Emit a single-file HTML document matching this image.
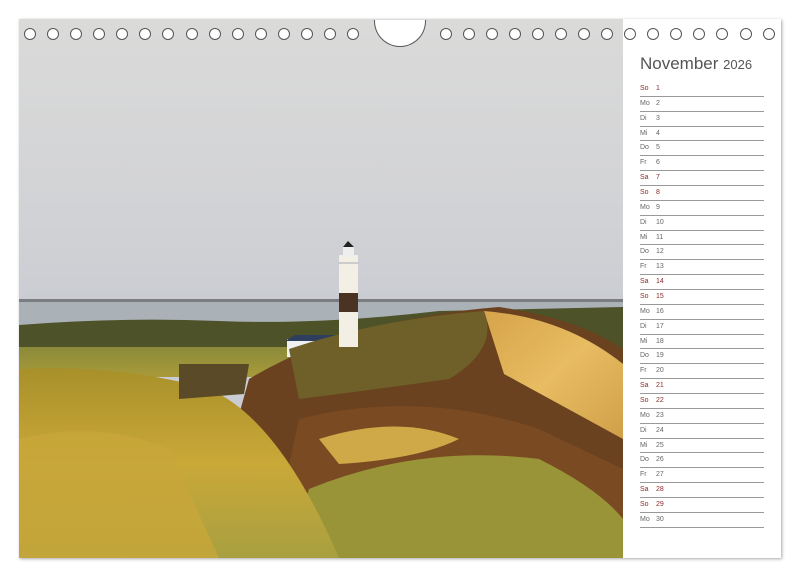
<!DOCTYPE html>
<html><head><meta charset="utf-8"><style>
*{margin:0;padding:0;box-sizing:border-box}
body{width:800px;height:577px;background:#fff;position:relative;overflow:hidden;font-family:"Liberation Sans",sans-serif}
.page{position:absolute;left:19px;top:19px;width:762px;height:539px;background:#fff;box-shadow:1px 1px 3px rgba(0,0,0,.35)}
.photo{position:absolute;left:19px;top:19px;width:604px;height:539px;overflow:hidden;
background:linear-gradient(#dadad9 0%,#d3d4d6 30%,#ccced3 50%,#c9ccd2 52%)}
.hole{position:absolute;top:28px;width:12px;height:12px;border:1.3px solid #555;border-radius:50%;background:#fff}
.cal{position:absolute;left:640px;top:82px;width:124px}
.row{height:14.86px;border-bottom:1.3px solid #999;font-size:7px;color:#666;line-height:13px;position:relative;padding-top:0}
.row span{position:absolute;left:16px}
.row.r{color:#8b2b2b}
</style></head><body>
<div class="page"></div>
<div class="photo">
<svg width="604" height="539" viewBox="0 0 604 539">
<defs>
<linearGradient id="g1" x1="0" y1="0" x2="0" y2="1"><stop offset="0" stop-color="#8a8a3a"/><stop offset="1" stop-color="#a89a3a"/></linearGradient>
<linearGradient id="dune" x1="0" y1="0" x2="1" y2="1"><stop offset="0" stop-color="#d6a44a"/><stop offset="0.5" stop-color="#e8bc62"/><stop offset="1" stop-color="#d0a048"/></linearGradient>
<linearGradient id="fg" x1="0" y1="0" x2="0" y2="1"><stop offset="0" stop-color="#a8902a"/><stop offset="0.5" stop-color="#caa838"/><stop offset="1" stop-color="#a8a040"/></linearGradient>
</defs>
<rect x="0" y="280" width="604" height="3" fill="#7a7c80"/>
<rect x="0" y="283" width="604" height="25" fill="#aab2b8"/>
<path d="M0 306 Q100 298 200 302 T420 292 L604 288 L604 340 L0 340Z" fill="#4e5228"/>
<rect x="0" y="328" width="300" height="30" fill="url(#g1)"/>
<rect x="268" y="320" width="50" height="18" fill="#eef0f2"/>
<path d="M266 322 L276 316 L318 316 L316 322Z" fill="#2e3e5e"/>
<path d="M230 360 Q330 300 480 288 Q560 300 604 330 L604 539 L180 539Z" fill="#6a4220"/>
<path d="M465 292 Q545 298 604 345 L604 420 Q540 385 485 355 Z" fill="url(#dune)"/>
<path d="M270 330 Q360 300 465 292 Q480 330 430 360 Q360 370 280 380Z" fill="#6e6028"/>
<path d="M280 400 Q400 370 520 410 L604 450 L604 539 L250 539Z" fill="#7a4a22"/>
<path d="M300 420 Q380 395 440 420 Q400 440 320 445Z" fill="#cfa848"/>
<path d="M290 470 Q400 425 520 440 Q580 470 604 500 L604 539 L270 539Z" fill="#9a9438"/>
<path d="M0 350 Q100 345 190 370 Q260 400 320 539 L0 539Z" fill="url(#fg)"/>
<path d="M0 420 Q80 400 150 430 L200 539 L0 539Z" fill="#c8a63a" opacity=".8"/>
<path d="M160 345 L230 345 L225 375 L160 380Z" fill="#5a4a28"/>
<rect x="320" y="236" width="19" height="92" fill="#f3efe4"/>
<rect x="320" y="274" width="19" height="19" fill="#4a3322"/>
<rect x="324" y="228" width="11" height="10" fill="#eee"/>
<path d="M324 228 L329 222 L335 228Z" fill="#222"/>
<rect x="319" y="243" width="21" height="2" fill="#ccc"/>
</svg>
</div>
<div class="hole" style="left:24px"></div><div class="hole" style="left:47px"></div><div class="hole" style="left:70px"></div><div class="hole" style="left:93px"></div><div class="hole" style="left:116px"></div><div class="hole" style="left:139px"></div><div class="hole" style="left:162px"></div><div class="hole" style="left:186px"></div><div class="hole" style="left:209px"></div><div class="hole" style="left:232px"></div><div class="hole" style="left:255px"></div><div class="hole" style="left:278px"></div><div class="hole" style="left:301px"></div><div class="hole" style="left:324px"></div><div class="hole" style="left:347px"></div>
<div style="position:absolute;left:374px;top:20px;width:52px;height:27px;border:1.3px solid #555;border-top:none;border-radius:0 0 26px 26px;background:#fff"></div>
<div class="hole" style="left:440px"></div><div class="hole" style="left:463px"></div><div class="hole" style="left:486px"></div><div class="hole" style="left:509px"></div><div class="hole" style="left:532px"></div><div class="hole" style="left:555px"></div><div class="hole" style="left:578px"></div><div class="hole" style="left:601px"></div><div class="hole" style="left:624px"></div><div class="hole" style="left:647px"></div><div class="hole" style="left:670px"></div><div class="hole" style="left:693px"></div><div class="hole" style="left:716px"></div><div class="hole" style="left:740px"></div><div class="hole" style="left:763px"></div>
<div style="position:absolute;left:640px;top:54px;font-size:17px;color:#555">November <span style="font-size:13px">2026</span></div>
<div class="cal">
<div class="row r">So<span>1</span></div><div class="row">Mo<span>2</span></div><div class="row">Di<span>3</span></div><div class="row">Mi<span>4</span></div><div class="row">Do<span>5</span></div><div class="row">Fr<span>6</span></div><div class="row r">Sa<span>7</span></div>
<div class="row r">So<span>8</span></div><div class="row">Mo<span>9</span></div><div class="row">Di<span>10</span></div><div class="row">Mi<span>11</span></div><div class="row">Do<span>12</span></div><div class="row">Fr<span>13</span></div><div class="row r">Sa<span>14</span></div>
<div class="row r">So<span>15</span></div><div class="row">Mo<span>16</span></div><div class="row">Di<span>17</span></div><div class="row">Mi<span>18</span></div><div class="row">Do<span>19</span></div><div class="row">Fr<span>20</span></div><div class="row r">Sa<span>21</span></div>
<div class="row r">So<span>22</span></div><div class="row">Mo<span>23</span></div><div class="row">Di<span>24</span></div><div class="row">Mi<span>25</span></div><div class="row">Do<span>26</span></div><div class="row">Fr<span>27</span></div><div class="row r">Sa<span>28</span></div>
<div class="row r">So<span>29</span></div><div class="row">Mo<span>30</span></div>
</div>
</body></html>
